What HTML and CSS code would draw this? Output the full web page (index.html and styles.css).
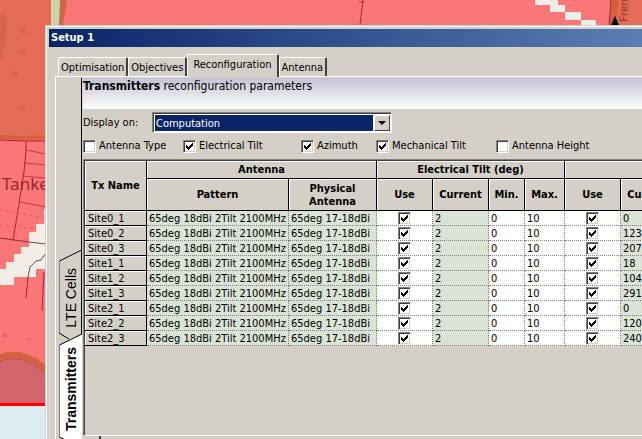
FILE: index.html
```html
<!DOCTYPE html>
<html lang="en">
<head>
  <meta charset="UTF-8">
  <title>Setup 1</title>
  <meta name="viewport" content="width=device-width, initial-scale=1.0">
  <link rel="stylesheet" href="styles.css">
</head>
<body>
  <!-- map behind the dialog -->
  <svg class="map" viewBox="0 0 642 439" preserveAspectRatio="xMinYMin slice" aria-hidden="true">
    <rect width="642" height="439" fill="#f97877"/>
    <path d="M0 0H51V141L20 138L0 137z" fill="#e46b55"/>
    <path d="M51 0H60V25H51z" fill="#c7d5a9"/>
    <path d="M60 0H67L63 25H59z" fill="#d56446"/>
    <path d="M0 14Q6 12 7 20L3 58Q2 61 0 61" fill="#d66547"/>
    <path d="M0 137L20 138L46 137" fill="none" stroke="#d36243" stroke-width="4"/>
    <path d="M0 140L24 141L46 141M26 142V150L24 172L13 241" fill="none" stroke="#a8222c"/>
    <path d="M26 150L46 154M24 163L46 165M22 176L46 178M20 202L46 207" fill="none" stroke="#c8383d"/>
    <path d="M0 210L46 218M0 225L46 230" fill="none" stroke="#fb4a50" stroke-dasharray="3 3"/>
    <path d="M46 209H44V224H36V232H29V247H21V254H14V262H6V269H0V285H14V277H36V269H46z" fill="#f2eee7"/>
    <path d="M0 238L29 242" fill="none" stroke="#a8222c"/>
    <path d="M29 242L46 244M46 253L41 260L36 261L30 267L28 277" fill="none" stroke="#555"/>
    <path d="M28 277L26 298M44 272L42 311" fill="none" stroke="#a8222c"/>
    <path d="M0 360Q20 350 46 371V404H0z" fill="#d3666d"/>
    <path d="M0 358Q22 349 46 370" fill="none" stroke="#d36243" stroke-width="7"/>
    <path d="M0 361Q22 353 46 374" fill="none" stroke="#c8383d" stroke-dasharray="2 3"/>
    <path d="M3 334h4v3h-4zM28 338h3v2h-3z" fill="#cf686c"/>
    <rect y="403" width="46" height="3" fill="#f00"/>
    <rect y="406" width="46" height="33" fill="#d9ebef"/>
    <g fill="none" stroke="#d05f45">
      <path id="grass" d="M19 32h8M23 32v-5M22 31l-2-3M24 31l2-3"/>
      <use href="#grass" y="22"/>
      <use href="#grass" x="-8" y="44"/>
      <use href="#grass" x="-1" y="78"/>
    </g>
    <path d="M535 0H558V5H565V12H581V20H596V25H581V20H565V12H550V5H535z" fill="#f2eee7"/>
    <path d="M612 0H642V25H609z" fill="#e46b55"/>
    <path d="M612 0H619L615 25H609z" fill="#d0603f"/>
    <path d="M611 0L609 25M363 0L360 25M359 2H364" fill="none" stroke="#a8222c"/>
    <path d="M611 25L615 16L619 25z"/>
    <text class="map-place" x="2" y="190">Tanke</text>
    <text class="map-road" transform="translate(627 22) rotate(-88)">Fren</text>
  </svg>

  <main class="window">
    <h1 class="title-bar">Setup 1</h1>

    <nav class="tabs" role="tablist">
      <button class="tab" role="tab">Optimisation</button>
      <button class="tab" role="tab">Objectives</button>
      <button class="tab tab-active" role="tab" aria-selected="true">Reconfiguration</button>
      <button class="tab" role="tab">Antenna</button>
    </nav>

    <div class="page">
      <nav class="side-tabs" role="tablist">
        <button class="side-tab side-cells" role="tab">
          <svg class="side-shape" viewBox="0 0 23 96" aria-hidden="true">
            <path d="M22.500 0V83L10 89L.500 83V11z" fill="#d4d0c8"/>
            <path d="M.500 11V83" stroke="#808080"/>
            <path d="M.500 11L22.500 0M0 83L10 89M22.500 0V84" fill="none" stroke="#000"/>
          </svg>
          <span class="side-text">LTE Cells</span>
        </button>
        <button class="side-tab side-active" role="tab" aria-selected="true">
          <svg class="side-shape" viewBox="0 0 23 110" aria-hidden="true">
            <path d="M23 0L.500 11V103L23 114z" fill="#fff"/>
            <path d="M.500 11V103" stroke="#808080"/>
            <path d="M23 0L.500 11M.500 103L23 114" fill="none" stroke="#000"/>
          </svg>
          <span class="side-text">Transmitters</span>
        </button>
      </nav>

      <section class="content">
        <h2 class="banner"><b>Transmitters</b> reconfiguration parameters</h2>

        <div class="display-row">
          <label class="display-label" for="display">Display on:</label>
          <div class="combo">
            <select id="display" class="combo-select">
              <option>Computation</option>
            </select>
            <span class="combo-arrow"></span>
          </div>
        </div>

        <div class="options">
          <label class="option"><input type="checkbox" class="check"> Antenna Type</label>
          <label class="option"><input type="checkbox" class="check" checked> Electrical Tilt</label>
          <label class="option"><input type="checkbox" class="check" checked> Azimuth</label>
          <label class="option"><input type="checkbox" class="check" checked> Mechanical Tilt</label>
          <label class="option"><input type="checkbox" class="check"> Antenna Height</label>
        </div>

        <div class="grid-box">
          <table class="grid">
            <colgroup>
              <col class="col-name"><col class="col-pattern"><col class="col-physical">
              <col class="col-value"><col class="col-value"><col class="col-min"><col class="col-max">
              <col class="col-value"><col class="col-value"><col class="col-value"><col class="col-value">
            </colgroup>
            <thead>
              <tr>
                <th rowspan="2">Tx Name</th>
                <th colspan="2">Antenna</th>
                <th colspan="4">Electrical Tilt (deg)</th>
                <th colspan="4">Azimuth</th>
              </tr>
              <tr class="sub-head">
                <th>Pattern</th>
                <th>Physical Antenna</th>
                <th>Use</th>
                <th>Current</th>
                <th>Min.</th>
                <th>Max.</th>
                <th>Use</th>
                <th>Current</th>
                <th>Min.</th>
                <th>Max.</th>
              </tr>
            </thead>
            <tbody id="rows"></tbody>
          </table>
        </div>

        <div class="scroll-strip"><span class="scroll-split"></span></div>
      </section>
    </div>
  </main>

  <script src="script.js"></script>
</body>
</html>
```
FILE: styles.css
```css
* {
  box-sizing: border-box;
}

body {
  margin: 0;
  height: 100vh;
  overflow: hidden;
  background: #f97877;
  color: #000;
  font-family: "DejaVu Sans Condensed", "DejaVu Sans", sans-serif;
  font-stretch: condensed;
  font-size: 11px;
  line-height: 14px;
}

button, select, input {
  font: inherit;
  color: inherit;
  margin: 0;
}

.map {
  position: absolute;
  inset: 0;
  width: 100%;
  height: 100%;
}

.map-place {
  font-family: "Noto Sans", sans-serif;
  font-size: 17px;
  fill: #9c2630;
}

.map-road {
  font-family: "Noto Sans", sans-serif;
  font-size: 11px;
  fill: #93392b;
}

/* dialog */
.window {
  position: relative;
  display: flex;
  flex-direction: column;
  height: calc(100vh - 25px);
  margin: 25px 0 0 45px;
  padding: 2px 0 0 2px;
  background: #d4d0c8;
  border: 1px solid #d4d0c8;
  border-width: 1px 0 0 1px;
  box-shadow: inset 1px 1px 0 #fff;
}

.title-bar {
  flex: none;
  height: 18px;
  margin: 1px 0 0 1px;
  padding: 0 2px;
  background: linear-gradient(to right, #0a246a, #5c7db3);
  color: #fff;
  font-size: 11px;
  line-height: 18px;
}

.tabs {
  display: flex;
  align-items: flex-end;
  height: 29px;
  padding-left: 10px;
}

.tab {
  height: 19px;
  padding: 2px 2px 0;
  background: #d4d0c8;
  border: 1px solid #fff;
  border-right: 2px solid #404040;
  border-bottom: 0;
  border-radius: 2px 2px 0 0;
  white-space: nowrap;
}

.tab-active {
  position: relative;
  height: 23px;
  margin-bottom: -1px;
  padding: 0 5px 2px;
}

.page {
  display: flex;
  flex: 1;
  min-height: 0;
  margin-left: 7px;
  padding-top: 1px;
  border: 1px solid #fff;
  border-width: 1px 0 0 1px;
}

/* vertical tabs */
.side-tabs {
  display: flex;
  flex-direction: column;
  flex: none;
  width: 26px;
  padding: 172px 0 0 3px;
  background: linear-gradient(#000, #000) right top / 1px 173px no-repeat;
}

.side-tab {
  position: relative;
  display: flex;
  align-items: center;
  justify-content: center;
  flex: none;
  width: 23px;
  height: 96px;
  padding: 0;
  background: none;
  border: 0;
  font-family: "Liberation Sans", Arial, sans-serif;
  font-size: 14px;
}

.side-active {
  height: 110px;
  margin-top: -12px;
  font-weight: bold;
}

.side-shape {
  position: absolute;
  inset: 0;
  width: 100%;
  height: 100%;
  overflow: visible;
}

.side-text {
  position: relative;
  writing-mode: vertical-rl;
  transform: rotate(180deg);
}

/* content */
.content {
  display: flex;
  flex-direction: column;
  flex: 1;
  min-width: 0;
  padding-left: 1px;
}

.banner {
  flex: none;
  height: 31px;
  margin: 0;
  background: linear-gradient(#c4c2d4, #fff);
  font-size: 12px;
  font-weight: normal;
  line-height: 16px;
  white-space: nowrap;
}

.display-row {
  display: flex;
  align-items: center;
  flex: none;
  height: 21px;
  margin-top: 3px;
}

.display-label {
  width: 69px;
}

.combo {
  display: flex;
  width: 240px;
  height: 21px;
  border: 1px solid #808080;
  border-right-color: #fff;
  border-bottom-color: #fff;
  background: #fff;
  box-shadow: inset 1px 1px 0 #404040;
  padding: 2px 1px 1px 2px;
}

.combo-select {
  appearance: none;
  flex: 1;
  min-width: 0;
  padding: 1px 1px 0;
  background: #0a246a;
  border: 0;
  border-radius: 0;
  color: #fff;
}

.combo-arrow {
  display: flex;
  align-items: center;
  justify-content: center;
  width: 16px;
  margin-left: 1px;
  background: #d4d0c8;
  border: 1px solid #fff;
  border-right-color: #404040;
  border-bottom-color: #404040;
}

.combo-arrow::before {
  content: "";
  border: 4px solid transparent;
  border-top-color: #000;
  border-bottom: 0;
}

.options {
  display: grid;
  grid-template-columns: 100px 118px 75px 120px 1fr;
  flex: none;
  height: 26px;
  align-items: center;
  white-space: nowrap;
}

.option {
  display: flex;
  align-items: center;
  gap: 3px;
}

.check {
  appearance: none;
  flex: none;
  width: 13px;
  height: 13px;
  background: #fff center / 7px 7px no-repeat;
  border: 1px solid #808080;
  border-right-color: #fff;
  border-bottom-color: #fff;
  box-shadow: inset 1px 1px 0 #404040, inset -1px -1px 0 #d4d0c8;
}

.check:checked {
  background-image: url("data:image/svg+xml,%3Csvg xmlns='http://www.w3.org/2000/svg' viewBox='0 0 7 7' shape-rendering='crispEdges'%3E%3Cpath d='M0 2v3h1v1h1v1h1v-1h1v-1h1v-1h1v-1h1V0h-1v1h-1v1h-1v1h-1v1h-1v-1h-1v-1z'/%3E%3C/svg%3E");
}

/* grid */
.grid-box {
  flex: 1;
  min-height: 0;
  overflow: hidden;
  border: 1px solid #808080;
  border-width: 1px 0 0 1px;
  box-shadow: inset 1px 1px 0 #404040;
  padding: 1px 0 0 1px;
}

.grid {
  table-layout: fixed;
  width: 704px;
  border-collapse: separate;
  border-spacing: 0;
}

.col-name { width: 62px; }
.col-pattern { width: 142px; }
.col-physical { width: 88px; }
.col-value { width: 56px; }
.col-min { width: 36px; }
.col-max { width: 40px; }

.grid th {
  height: 18px;
  padding: 0 4px;
  background: #d4d0c8;
  border-right: 1px solid #000;
  border-bottom: 1px solid #000;
  box-shadow: inset 1px 1px 0 #fff;
  line-height: 13px;
}

.grid .sub-head th {
  height: 32px;
}

.grid tbody th {
  height: 15px;
  padding: 0 3px;
  font-weight: normal;
  text-align: left;
}

.grid td {
  height: 15px;
  padding: 0 2px;
  background: #fff;
  border-right: 1px dotted #808080;
  border-bottom: 1px dotted #808080;
  line-height: 13px;
  white-space: nowrap;
}

.grid .fixed {
  background: #dae3d6;
}

.grid .use {
  text-align: center;
}

.use .check {
  display: block;
  margin: 0 auto;
}

.scroll-strip {
  display: flex;
  flex: none;
  height: 4px;
  margin-left: 3px;
  border-top: 1px solid #fff;
}

.scroll-split {
  width: 15px;
  border-right: 2px solid #404040;
}
```
FILE: script.js
```js
const transmitters = [
  ['Site0_1', 0],
  ['Site0_2', 123],
  ['Site0_3', 207],
  ['Site1_1', 18],
  ['Site1_2', 104],
  ['Site1_3', 291],
  ['Site2_1', 0],
  ['Site2_2', 120],
  ['Site2_3', 240]
];

document.getElementById('rows').innerHTML = transmitters.map(([name, azimuth]) => `
  <tr>
    <th scope="row">${name}</th>
    <td class="fixed">65deg 18dBi 2Tilt 2100MHz</td>
    <td class="fixed">65deg 17-18dBi</td>
    <td class="use"><input type="checkbox" class="check" aria-label="${name} tilt" checked></td>
    <td class="fixed">2</td>
    <td>0</td>
    <td>10</td>
    <td class="use"><input type="checkbox" class="check" aria-label="${name} azimuth" checked></td>
    <td class="fixed">${azimuth}</td>
    <td></td>
    <td></td>
  </tr>`).join('');
```
